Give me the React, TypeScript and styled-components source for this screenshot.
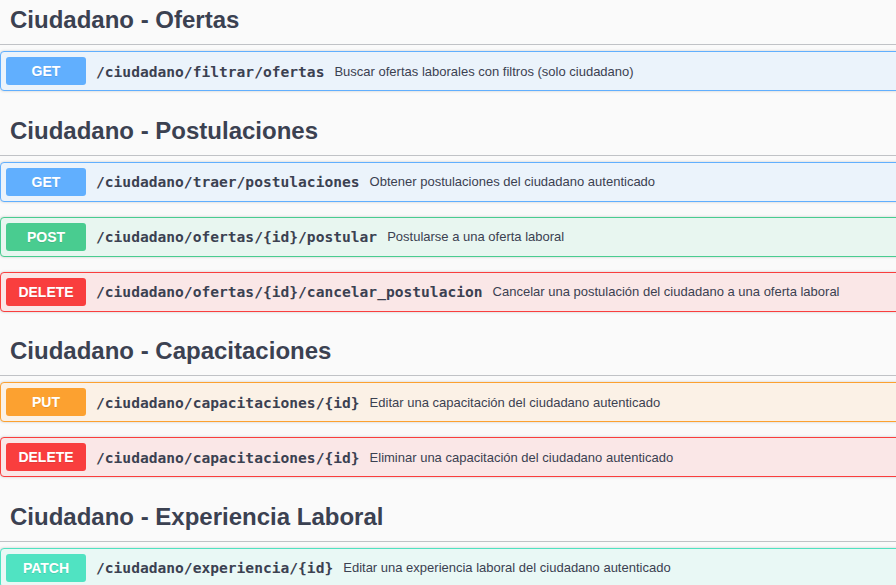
import React from 'react';
import styled, { createGlobalStyle } from 'styled-components';

const GlobalStyle = createGlobalStyle`
  html, body {
    margin: 0;
    padding: 0;
    background: #fafafa;
    overflow: hidden;
  }
  body {
    font-family: 'Liberation Sans', Arial, sans-serif;
    color: #3b4151;
  }
`;

type Method = 'get' | 'post' | 'delete' | 'put' | 'patch';

const methodColors: Record<Method, { main: string; bg: string }> = {
  get: { main: '#61affe', bg: '#ebf3fb' },
  post: { main: '#49cc90', bg: '#e8f6f0' },
  delete: { main: '#f93e3e', bg: '#fae7e7' },
  put: { main: '#fca130', bg: '#fbf1e6' },
  patch: { main: '#50e3c2', bg: '#e9f8f5' },
};

const Wrapper = styled.div`
  width: 900px;
`;

const Section = styled.section`
  padding-bottom: 4.5px;
`;

const TagHeading = styled.h3`
  margin: 0 0 6px;
  padding: 8px 20px 12px 10px;
  font-size: 24px;
  line-height: 24px;
  font-weight: 700;
  color: #3b4151;
  border-bottom: 1px solid rgba(59, 65, 81, 0.3);
`;

const OpBlock = styled.div<{ $method: Method }>`
  margin: 0 0 15px;
  border: 1px solid ${(p) => methodColors[p.$method].main};
  background: ${(p) => methodColors[p.$method].bg};
  border-radius: 4px;
  box-shadow: 0 0 3px rgba(0, 0, 0, 0.19);
`;

const Summary = styled.div`
  display: flex;
  align-items: center;
  padding: 5px;
`;

const MethodBadge = styled.span<{ $method: Method }>`
  min-width: 80px;
  padding: 6px 0;
  font-size: 14px;
  line-height: 16px;
  font-weight: 700;
  text-align: center;
  color: #fff;
  background: ${(p) => methodColors[p.$method].main};
  border-radius: 3px;
  text-shadow: 0 1px 0 rgba(0, 0, 0, 0.1);
`;

const Path = styled.span`
  padding: 0 10px;
  font-family: 'DejaVu Sans Mono', monospace;
  font-size: 14.6px;
  font-weight: 700;
  color: #3b4151;
  white-space: nowrap;
`;

const Description = styled.span`
  font-size: 13px;
  color: #3b4151;
  white-space: nowrap;
`;

interface Op {
  method: Method;
  path: string;
  summary: string;
}

const sections: { title: string; ops: Op[] }[] = [
  {
    title: 'Ciudadano - Ofertas',
    ops: [
      { method: 'get', path: '/ciudadano/filtrar/ofertas', summary: 'Buscar ofertas laborales con filtros (solo ciudadano)' },
    ],
  },
  {
    title: 'Ciudadano - Postulaciones',
    ops: [
      { method: 'get', path: '/ciudadano/traer/postulaciones', summary: 'Obtener postulaciones del ciudadano autenticado' },
      { method: 'post', path: '/ciudadano/ofertas/{id}/postular', summary: 'Postularse a una oferta laboral' },
      { method: 'delete', path: '/ciudadano/ofertas/{id}/cancelar_postulacion', summary: 'Cancelar una postulación del ciudadano a una oferta laboral' },
    ],
  },
  {
    title: 'Ciudadano - Capacitaciones',
    ops: [
      { method: 'put', path: '/ciudadano/capacitaciones/{id}', summary: 'Editar una capacitación del ciudadano autenticado' },
      { method: 'delete', path: '/ciudadano/capacitaciones/{id}', summary: 'Eliminar una capacitación del ciudadano autenticado' },
    ],
  },
  {
    title: 'Ciudadano - Experiencia Laboral',
    ops: [
      { method: 'patch', path: '/ciudadano/experiencia/{id}', summary: 'Editar una experiencia laboral del ciudadano autenticado' },
    ],
  },
];

const App: React.FC = () => (
  <Wrapper>
    <GlobalStyle />
    {sections.map((s) => (
      <Section key={s.title}>
        <TagHeading>{s.title}</TagHeading>
        {s.ops.map((op) => (
          <OpBlock key={op.method + op.path} $method={op.method}>
            <Summary>
              <MethodBadge $method={op.method}>{op.method.toUpperCase()}</MethodBadge>
              <Path>{op.path}</Path>
              <Description>{op.summary}</Description>
            </Summary>
          </OpBlock>
        ))}
      </Section>
    ))}
  </Wrapper>
);

export default App;
